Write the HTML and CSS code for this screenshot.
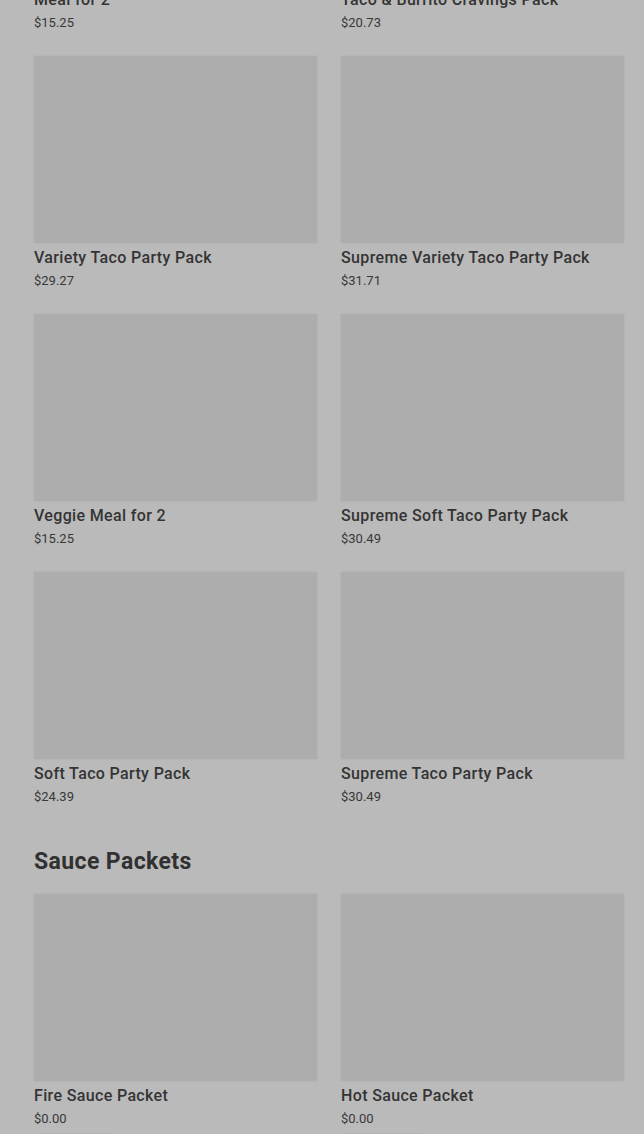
FILE: index.html
```html
<!DOCTYPE html>
<html>
<head>
<meta charset="utf-8">
<link rel="stylesheet" href="styles.css">
</head>
<body>
<main class="page">
  <section class="grid grid-first">
    <div class="card"><div class="img"></div><div class="title">Meal for 2</div><div class="price">$15.25</div></div>
    <div class="card"><div class="img"></div><div class="title">Taco &amp; Burrito Cravings Pack</div><div class="price">$20.73</div></div>
    <div class="card"><div class="img"></div><div class="title">Variety Taco Party Pack</div><div class="price">$29.27</div></div>
    <div class="card"><div class="img"></div><div class="title">Supreme Variety Taco Party Pack</div><div class="price">$31.71</div></div>
    <div class="card"><div class="img"></div><div class="title">Veggie Meal for 2</div><div class="price">$15.25</div></div>
    <div class="card"><div class="img"></div><div class="title">Supreme Soft Taco Party Pack</div><div class="price">$30.49</div></div>
    <div class="card"><div class="img"></div><div class="title">Soft Taco Party Pack</div><div class="price">$24.39</div></div>
    <div class="card"><div class="img"></div><div class="title">Supreme Taco Party Pack</div><div class="price">$30.49</div></div>
  </section>
  <h2 class="heading">Sauce Packets</h2>
  <section class="grid">
    <div class="card"><div class="img"></div><div class="title">Fire Sauce Packet</div><div class="price">$0.00</div><div class="btn btn-left"></div></div>
    <div class="card"><div class="img"></div><div class="title">Hot Sauce Packet</div><div class="price">$0.00</div><div class="btn btn-right"></div></div>
  </section>
</main>
</body>
</html>
```
FILE: styles.css
```css
html, body {
  margin: 0;
  padding: 0;
  background: #bababa;
  overflow: hidden;
}
body {
  font-family: Roboto, "Noto Sans", Arial, sans-serif;
  color: #333333;
}
.page {
  padding: 0 20px 0 34px;
}
.grid {
  display: grid;
  grid-template-columns: 283px 283px;
  column-gap: 24px;
  row-gap: 24px;
}
.grid-first {
  margin-top: -202px;
}
.card {
  display: flex;
  flex-direction: column;
}
.img {
  height: 187px;
  background: #adadad;
  box-shadow: 0 0 2px rgba(0, 0, 0, 0.08);
}
.title {
  margin-top: 5px;
  font-size: 16px;
  line-height: 20px;
  font-weight: 500;
  letter-spacing: 0.35px;
  color: #343434;
  white-space: nowrap;
}
.price {
  margin-top: 4px;
  font-size: 13px;
  line-height: 18px;
  color: #383838;
}
.heading {
  margin: 42px 0 18px;
  font-size: 23px;
  line-height: 28px;
  font-weight: 700;
  color: #313131;
  letter-spacing: 0.4px;
}
.btn {
  margin-top: 5px;
  height: 20px;
  width: 78px;
  margin-left: 4px;
  background: #b3b3b3;
  border-radius: 2px;
}
.btn-right {
  margin-left: 0;
  width: 84px;
}
```
